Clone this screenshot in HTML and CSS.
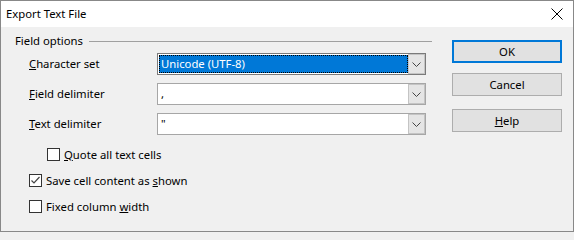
FILE: index.html
```html
<!DOCTYPE html>
<html>
<head>
<meta charset="utf-8">
<link rel="stylesheet" href="styles.css">
</head>
<body>
<div class="window">
  <div class="titlebar">
    <span class="title">Export Text File</span>
    <svg class="close" width="12" height="12" viewBox="0 0 12 12"><path d="M0.5 0.5 L11.5 11.5 M11.5 0.5 L0.5 11.5" stroke="#000" stroke-width="1"/></svg>
  </div>
  <div class="content">
    <div class="main">
      <div class="frame-head">
        <span class="frame-title">Field options</span>
        <span class="frame-line"></span>
      </div>
      <div class="row">
        <span class="label"><u>C</u>haracter set</span>
        <div class="combo focused">
          <span class="value"><span class="selected">Unicode (UTF-8)</span></span>
          <span class="drop"><svg width="9" height="5" viewBox="0 0 9 5"><polyline points="0.5,0.5 4.5,4.5 8.5,0.5" fill="none" stroke="#444" stroke-width="1"/></svg></span>
        </div>
      </div>
      <div class="row">
        <span class="label"><u>F</u>ield delimiter</span>
        <div class="combo">
          <span class="value">,</span>
          <span class="drop"><svg width="9" height="5" viewBox="0 0 9 5"><polyline points="0.5,0.5 4.5,4.5 8.5,0.5" fill="none" stroke="#444" stroke-width="1"/></svg></span>
        </div>
      </div>
      <div class="row">
        <span class="label"><u>T</u>ext delimiter</span>
        <div class="combo">
          <span class="value">"</span>
          <span class="drop"><svg width="9" height="5" viewBox="0 0 9 5"><polyline points="0.5,0.5 4.5,4.5 8.5,0.5" fill="none" stroke="#444" stroke-width="1"/></svg></span>
        </div>
      </div>
      <div class="check indent first">
        <span class="box"></span>
        <span><u>Q</u>uote all text cells</span>
      </div>
      <div class="check">
        <span class="box"><svg width="11" height="11" viewBox="0 0 11 11"><polyline points="1.5,5.5 4,8 9.5,2" fill="none" stroke="#444" stroke-width="1.2"/></svg></span>
        <span>Save cell content as <u>s</u>hown</span>
      </div>
      <div class="check">
        <span class="box"></span>
        <span>Fixed column <u>w</u>idth</span>
      </div>
    </div>
    <div class="buttons">
      <button class="btn default">OK</button>
      <button class="btn cancel">Cancel</button>
      <button class="btn help"><u>H</u>elp</button>
    </div>
  </div>
</div>
</body>
</html>
```
FILE: styles.css
```css
html, body {
  margin: 0;
  padding: 0;
}
body {
  font-family: "Noto Sans", "DejaVu Sans", sans-serif;
  font-size: 11.3px;
  color: #000;
  background: #f0f0f0;
}
.window {
  width: 574px;
  height: 232px;
  box-sizing: border-box;
  border: 1px solid #888;
  background: #f0f0f0;
  display: flex;
  flex-direction: column;
}
.titlebar {
  height: 26px;
  background: #fff;
  display: flex;
  align-items: center;
  justify-content: space-between;
  padding-left: 5px;
  padding-right: 10px;
}
.title {
  line-height: 16px;
}
.close {
  display: block;
}
.content {
  display: flex;
  flex: 1;
  padding-left: 14px;
}
.main {
  width: 417px;
  padding-top: 6px;
}
.frame-head {
  display: flex;
  align-items: center;
  height: 16px;
}
.frame-title {
  line-height: 16px;
}
.frame-line {
  flex: 1;
  height: 1px;
  background: #a0a0a0;
  margin-left: 6px;
}
.row {
  display: flex;
  align-items: center;
  height: 22px;
  margin-top: 8px;
  padding-left: 14px;
}
.frame-head + .row {
  margin-top: 4px;
}
.label {
  width: 128px;
  line-height: 16px;
}
.combo {
  width: 269px;
  height: 22px;
  box-sizing: border-box;
  border: 1px solid #a6a6a6;
  background: #fff;
  display: flex;
  align-items: stretch;
}
.combo.focused {
  border-color: #7a7a7a;
}
.value {
  flex: 1;
  display: flex;
  align-items: center;
  padding-left: 3px;
  line-height: 16px;
}
.combo.focused .value {
  padding: 1px 0 1px 1px;
  align-items: stretch;
}
.selected {
  flex: 1;
  background: #0078d7;
  color: #fff;
  outline: 1px dotted #000;
  outline-offset: -1px;
  padding-left: 2px;
  display: flex;
  align-items: center;
}
.drop {
  width: 17px;
  box-sizing: border-box;
  border: 1px solid #c4c4c4;
  background: #e5e5e5;
  display: flex;
  align-items: center;
  justify-content: center;
}
.check {
  display: flex;
  align-items: center;
  height: 16px;
  margin-top: 10px;
  padding-left: 14px;
}
.check.first {
  margin-top: 11px;
}
.check.indent {
  padding-left: 32px;
}
.box {
  width: 13px;
  height: 13px;
  box-sizing: border-box;
  border: 1px solid #333;
  background: #fff;
  margin-right: 4px;
  display: flex;
  align-items: center;
  justify-content: center;
}
.box svg {
  display: block;
}
.buttons {
  display: flex;
  flex-direction: column;
  margin-left: 20px;
  padding-top: 13px;
}
.btn {
  width: 110px;
  height: 23px;
  box-sizing: border-box;
  font-family: inherit;
  font-size: 11.3px;
  color: #000;
  background: #e1e1e1;
  border: 1px solid #adadad;
  padding: 0;
  line-height: 16px;
}
.btn.default {
  border: 2px solid #0078d7;
}
.btn.cancel {
  margin-top: 10px;
}
.btn.help {
  margin-top: 13px;
}
```
